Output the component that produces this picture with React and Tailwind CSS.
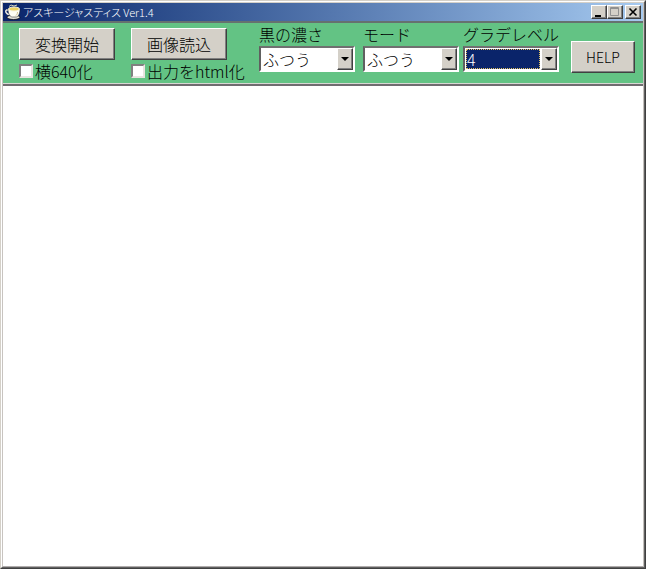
import { useState } from "react";

const raised =
  "border border-t-white border-l-white border-r-[#404040] border-b-[#404040] bg-[#d4d0c8] shadow-[inset_-1px_-1px_0_#808080]";

export default function App() {
  return (
    <div className="flex min-h-screen flex-col border border-t-[#d4d0c8] border-l-[#d4d0c8] border-r-[#404040] border-b-[#404040] bg-white font-['Noto_Sans_CJK_JP',sans-serif] text-black">
      <div className="flex grow flex-col border border-t-white border-l-white border-r-[#606060] border-b-[#606060]">
        <div className="flex grow flex-col border border-t-[#d4d0c8] border-l-[#c8c4c0] border-r-[#c4c0bc] border-b-[#b0acac]">
          <TitleBar />
          <Toolbar />
          {/* Output area */}
          <main className="grow bg-white" />
        </div>
      </div>
    </div>
  );
}

function TitleBar() {
  return (
    <header className="flex h-[18px] items-center bg-linear-to-r from-[#0a246a] to-[#a6caf0] px-0.5">
      <CupIcon />
      <h1 className="ml-0.5 grow text-[11px] leading-4 font-light whitespace-nowrap text-white [font-feature-settings:'palt']">
        アスキージャスティス Ver1.4
      </h1>
      <CaptionButton label="最小化">
        <path d="M3 9h6v2H3z" fill="#000" />
      </CaptionButton>
      <CaptionButton label="最大化">
        <path d="M2.5 1.5h8v8h-8zM2 2.5h9" fill="none" stroke="#909090" />
      </CaptionButton>
      <div className="w-0.5" />
      <CaptionButton label="閉じる">
        <path d="M3.5 2.5l7 7M10.5 2.5l-7 7" fill="none" stroke="#000" strokeWidth="1.6" />
      </CaptionButton>
    </header>
  );
}

function CaptionButton({ label, children }) {
  return (
    <button type="button" aria-label={label} className={`h-3.5 w-4 ${raised}`}>
      <svg width="14" height="12" viewBox="0 0 14 12" className="block">
        {children}
      </svg>
    </button>
  );
}

function CupIcon() {
  return (
    <svg width="16" height="16" viewBox="0 0 16 16">
      <ellipse cx="8.5" cy="13.3" rx="6.5" ry="2.2" fill="#e4e2d8" stroke="#111" strokeWidth="0.8" />
      <path d="M3.5 6H1.5C0 7 1 10.5 4.5 10.5" fill="none" stroke="#f4f0e4" strokeWidth="1.4" />
      <path d="M3 5h12c0 4-1.500 8-4 8H7.500C5 13 3 9.500 3 5z" fill="#fffef4" stroke="#222" strokeWidth="0.5" />
      <ellipse cx="9" cy="5" rx="5.500" ry="2" fill="#ecd060" stroke="#f8f4e0" />
      <path d="M4 2.500l2-1.500 3 1 3-1" fill="none" stroke="#d0d0b8" />
      <path d="M12.500 8c0 2-.8 3-2 4" fill="none" stroke="#d2c290" />
    </svg>
  );
}

function Toolbar() {
  return (
    <section className="border-t-2 border-b-2 border-t-[#66716f] border-b-[#706c70]">
      <div className="flex items-start border-b border-[#d8d8d4] bg-[#63c384] pt-[5px] pr-2 pb-0.5 pl-4 text-[16px] leading-5 font-light">
        <div className="mr-4 w-24">
          <PushButton label="変換開始" />
          <CheckBox label="横640化" />
        </div>
        <div className="mr-8 w-24">
          <PushButton label="画像読込" />
          <CheckBox label="出力をhtml化" />
        </div>
        <ComboBox label="黒の濃さ" options={["うすい", "ふつう", "こい"]} initial="ふつう" />
        <div className="mr-1 ml-2">
          <ComboBox label="モード" options={["ふつう"]} initial="ふつう" />
        </div>
        <ComboBox label="グラデレベル" options={["2", "3", "4"]} initial="4" active />
        <button type="button" className={`mt-[13px] ml-auto h-8 w-16 text-[14px] ${raised}`}>
          HELP
        </button>
      </div>
    </section>
  );
}

function PushButton({ label }) {
  return (
    <button type="button" className={`block h-8 w-24 ${raised}`}>
      {label}
    </button>
  );
}

function CheckBox({ label }) {
  return (
    <label className="mt-px flex items-center gap-0.5 whitespace-nowrap">
      <input
        type="checkbox"
        className="size-3.5 shrink-0 appearance-none border-2 border-t-[#808080] border-r-[#e8e4e0] border-b-[#e8e4e0] border-l-[#808080] bg-white checked:bg-[#0a246a]"
      />
      {label}
    </label>
  );
}

function ComboBox({ label, options, initial, active }) {
  const [value, setValue] = useState(initial);

  return (
    <label className="-mt-1 block w-24">
      <span className="mb-0.5 block whitespace-nowrap">{label}</span>
      <span className="relative block h-[26px] border-2 border-t-[#707070] border-r-white border-b-white border-l-[#606060] bg-white">
        <select
          value={value}
          onChange={(e) => setValue(e.target.value)}
          className={`block appearance-none outline-none ${
            active
              ? "m-px h-5 w-[74px] border border-dotted border-[#e0c060] bg-[#0a246a] pl-0 leading-4 text-white"
              : "h-[22px] w-full bg-white pl-0.5"
          }`}
        >
          {options.map((option) => (
            <option key={option}>{option}</option>
          ))}
        </select>
        {/* Drop-down arrow */}
        <span
          className={`pointer-events-none absolute top-0 right-0 flex h-[22px] w-4 items-center justify-center ${raised}`}
        >
          <svg width="8" height="4" viewBox="0 0 8 4">
            <path d="M0 0h8L4 4z" fill="#000" />
          </svg>
        </span>
      </span>
    </label>
  );
}
